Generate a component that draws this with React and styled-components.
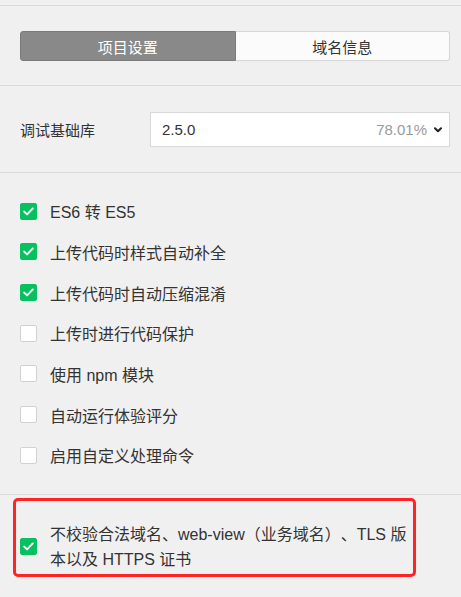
import React from "react";
import styled, { createGlobalStyle } from "styled-components";

const Global = createGlobalStyle`
  html, body { margin: 0; padding: 0; background: #f0f0f0; }
  body {
    font-family: "Liberation Sans", "Noto Sans CJK SC", Arial, sans-serif;
    color: #353535;
    text-spacing-trim: space-all;
  }
`;

const Page = styled.div`
  width: 461px;
  height: 597px;
  padding-top: 5px;
  box-sizing: border-box;
  overflow: hidden;
  background: #f0f0f0;
`;

const Section = styled.section`
  position: relative;
  border-top: 1px solid #dadada;
  padding: ${(p) => p.$pad};
`;

const Segmented = styled.div`
  display: flex;
  height: 30px;
  margin: 0 11px 0 20px;
`;

const SegButton = styled.div`
  flex: 1;
  display: flex;
  align-items: center;
  justify-content: center;
  font-size: 15px;
  box-sizing: border-box;
  color: ${(p) => (p.$active ? "#ffffff" : "#333333")};
  background: ${(p) => (p.$active ? "#898989" : "#fbfbfb")};
  border: 1px solid ${(p) => (p.$active ? "#7b7b7b" : "#d6d6d6")};
  border-radius: ${(p) => (p.$side === "left" ? "3px 0 0 3px" : "0 3px 3px 0")};
  ${(p) => (p.$side === "right" ? "border-left: none;" : "")}
`;

const FieldRow = styled.div`
  display: flex;
  align-items: center;
  padding: 0 11px 0 20px;
`;

const FieldLabel = styled.div`
  width: 130px;
  font-size: 15px;
  color: #333;
`;

const Select = styled.div`
  flex: 1;
  height: 35px;
  box-sizing: border-box;
  background: #fff;
  border: 1px solid #d8d8d8;
  display: flex;
  align-items: center;
  padding: 0 7px 0 11px;
  font-size: 15px;
`;

const SelectValue = styled.span`
  flex: 1;
  color: #333;
`;

const SelectMeta = styled.span`
  color: #9a9a9a;
  margin-right: 7px;
`;

const CheckList = styled.div`
  display: flex;
  flex-direction: column;
`;

const CheckRow = styled.label`
  display: flex;
  align-items: center;
  height: 40.67px;
  padding-left: 20px;
  font-size: 16px;
  color: #333;
`;

const Box = styled.span`
  width: 17px;
  height: 17px;
  box-sizing: border-box;
  border-radius: 2px;
  flex: none;
  display: flex;
  align-items: center;
  justify-content: center;
  margin-right: 13px;
  background: ${(p) => (p.$checked ? "#07c160" : "#ffffff")};
  border: 1px solid ${(p) => (p.$checked ? "#07c160" : "#d2d2d2")};
`;

const WrapRow = styled.label`
  display: flex;
  align-items: center;
  padding-left: 20px;
  font-size: 16px;
  color: #333;
`;

const WrapText = styled.span`
  width: 364px;
  line-height: 25px;
`;

const Annotation = styled.div`
  position: absolute;
  left: 13px;
  top: 3px;
  width: 403px;
  height: 79px;
  box-sizing: border-box;
  border: 3px solid #ff2323;
  border-radius: 5px;
  pointer-events: none;
`;

const Check = () => (
  <svg width="11" height="9" viewBox="0 0 11 9">
    <path d="M1.2 4.6 L4.1 7.4 L9.8 1.4" fill="none" stroke="#fff" strokeWidth="1.9" strokeLinecap="round" strokeLinejoin="round" />
  </svg>
);

const Chevron = () => (
  <svg width="8" height="6" viewBox="0 0 8 6">
    <path d="M1 1.2 L4 4.2 L7 1.2" fill="none" stroke="#222" strokeWidth="2" strokeLinecap="round" strokeLinejoin="round" />
  </svg>
);

const items = [
  { label: "ES6 转 ES5", checked: true },
  { label: "上传代码时样式自动补全", checked: true },
  { label: "上传代码时自动压缩混淆", checked: true },
  { label: "上传时进行代码保护", checked: false },
  { label: "使用 npm 模块", checked: false },
  { label: "自动运行体验评分", checked: false },
  { label: "启用自定义处理命令", checked: false },
];

export default function App() {
  return (
    <Page>
      <Global />
      <Section $pad="25px 0 24px">
        <Segmented>
          <SegButton $active $side="left">项目设置</SegButton>
          <SegButton $side="right">域名信息</SegButton>
        </Segmented>
      </Section>
      <Section $pad="26px 0 25px">
        <FieldRow>
          <FieldLabel>调试基础库</FieldLabel>
          <Select>
            <SelectValue>2.5.0</SelectValue>
            <SelectMeta>78.01%</SelectMeta>
            <Chevron />
          </Select>
        </FieldRow>
      </Section>
      <Section $pad="18px 0 18px">
        <CheckList>
          {items.map((it) => (
            <CheckRow key={it.label}>
              <Box $checked={it.checked}>{it.checked && <Check />}</Box>
              {it.label}
            </CheckRow>
          ))}
        </CheckList>
      </Section>
      <Section $pad="27px 0 0">
        <WrapRow>
          <Box $checked>
            <Check />
          </Box>
          <WrapText>不校验合法域名、web-view（业务域名）、TLS 版本以及 HTTPS 证书</WrapText>
        </WrapRow>
        <Annotation />
      </Section>
    </Page>
  );
}
